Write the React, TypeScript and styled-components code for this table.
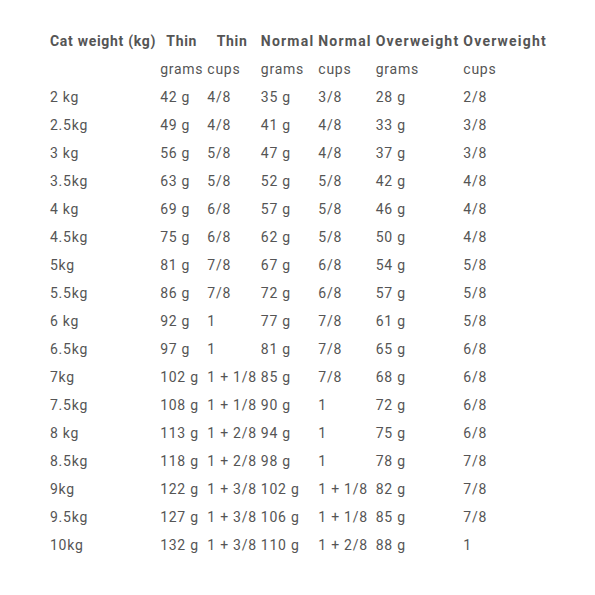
import React from 'react';
import styled, { createGlobalStyle } from 'styled-components';

const GlobalStyle = createGlobalStyle`
  html, body {
    margin: 0;
    padding: 0;
    background: #ffffff;
  }
`;

const rows: string[][] = [
  ['2 kg', '42 g', '4/8', '35 g', '3/8', '28 g', '2/8'],
  ['2.5kg', '49 g', '4/8', '41 g', '4/8', '33 g', '3/8'],
  ['3 kg', '56 g', '5/8', '47 g', '4/8', '37 g', '3/8'],
  ['3.5kg', '63 g', '5/8', '52 g', '5/8', '42 g', '4/8'],
  ['4 kg', '69 g', '6/8', '57 g', '5/8', '46 g', '4/8'],
  ['4.5kg', '75 g', '6/8', '62 g', '5/8', '50 g', '4/8'],
  ['5kg', '81 g', '7/8', '67 g', '6/8', '54 g', '5/8'],
  ['5.5kg', '86 g', '7/8', '72 g', '6/8', '57 g', '5/8'],
  ['6 kg', '92 g', '1', '77 g', '7/8', '61 g', '5/8'],
  ['6.5kg', '97 g', '1', '81 g', '7/8', '65 g', '6/8'],
  ['7kg', '102 g', '1 + 1/8', '85 g', '7/8', '68 g', '6/8'],
  ['7.5kg', '108 g', '1 + 1/8', '90 g', '1', '72 g', '6/8'],
  ['8 kg', '113 g', '1 + 2/8', '94 g', '1', '75 g', '6/8'],
  ['8.5kg', '118 g', '1 + 2/8', '98 g', '1', '78 g', '7/8'],
  ['9kg', '122 g', '1 + 3/8', '102 g', '1 + 1/8', '82 g', '7/8'],
  ['9.5kg', '127 g', '1 + 3/8', '106 g', '1 + 1/8', '85 g', '7/8'],
  ['10kg', '132 g', '1 + 3/8', '110 g', '1 + 2/8', '88 g', '1'],
];

const headers = ['Cat weight (kg)', 'Thin', 'Thin', 'Normal', 'Normal', 'Overweight', 'Overweight'];
const units = ['', 'grams', 'cups', 'grams', 'cups', 'grams', 'cups'];

const Page = styled.div`
  padding: 26px 0 0 47px;
  font-family: Roboto, 'Liberation Sans', sans-serif;
  color: #555555;
`;

const Table = styled.table`
  border-collapse: separate;
  border-spacing: 2px;
  font-size: 14px;
  line-height: 24px;
  letter-spacing: 0.75px;
`;

const HeadCell = styled.th<{ $wide?: boolean }>`
  padding: 1px;
  font-weight: 700;
  text-align: center;
  white-space: nowrap;
  letter-spacing: ${(props) => (props.$wide ? '1.2px' : '0.7px')};
`;

const Cell = styled.td`
  padding: 1px;
  font-weight: 400;
  text-align: left;
  white-space: nowrap;
`;

export default function App() {
  return (
    <>
      <GlobalStyle />
      <Page>
        <Table>
          <thead>
            <tr>
              {headers.map((h, i) => (
                <HeadCell key={i} $wide={i >= 3}>
                  {h}
                </HeadCell>
              ))}
            </tr>
          </thead>
          <tbody>
            <tr>
              {units.map((u, i) => (
                <Cell key={i}>{u}</Cell>
              ))}
            </tr>
            {rows.map((r) => (
              <tr key={r[0]}>
                {r.map((c, i) => (
                  <Cell key={i}>{c}</Cell>
                ))}
              </tr>
            ))}
          </tbody>
        </Table>
      </Page>
    </>
  );
}
